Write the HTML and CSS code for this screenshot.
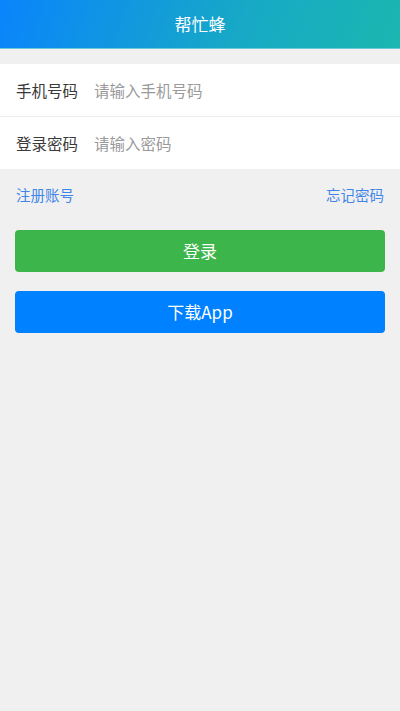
FILE: index.html
```html
<!DOCTYPE html>
<html lang="zh">
<head>
<meta charset="utf-8">
<link rel="stylesheet" href="styles.css">
</head>
<body>
<header class="header">帮忙蜂</header>
<section class="form">
  <div class="row">
    <span class="label">手机号码</span>
    <span class="placeholder">请输入手机号码</span>
  </div>
  <div class="row">
    <span class="label">登录密码</span>
    <span class="placeholder">请输入密码</span>
  </div>
</section>
<div class="links">
  <a class="link">注册账号</a>
  <a class="link">忘记密码</a>
</div>
<div class="buttons">
  <div class="btn btn-login">登录</div>
  <div class="btn btn-app">下载App</div>
</div>
</body>
</html>
```

FILE: styles.css
```css
html, body {
  margin: 0;
  padding: 0;
}
body {
  background: #f0f0f0;
  font-family: "Noto Sans CJK SC", "Liberation Sans", sans-serif;
  min-height: 711px;
}
.header {
  height: 48px;
  line-height: 48px;
  text-align: center;
  color: #fff;
  font-size: 17px;
  background: linear-gradient(110deg, #0a84fc 0%, #17a9c6 60%, #1bb7b0 100%);
  box-shadow: 0 1px 0 #6cc8d8;
}
.form {
  margin-top: 16px;
  background: #fff;
}
.row {
  height: 52px;
  display: flex;
  align-items: center;
  padding-left: 16px;
  font-size: 15.5px;
}
.row + .row {
  border-top: 1px solid #ececec;
}
.label {
  color: #3a3a3a;
  width: 78px;
}
.placeholder {
  color: #9a9a9a;
}
.links {
  display: flex;
  justify-content: space-between;
  padding: 14px 16px 0;
  font-size: 14.5px;
  line-height: 24px;
}
.link {
  color: #3f86e8;
}
.buttons {
  padding: 23px 15px 0;
  display: flex;
  flex-direction: column;
  gap: 19px;
}
.btn {
  height: 42px;
  line-height: 42px;
  border-radius: 4px;
  text-align: center;
  color: #fff;
  font-size: 17px;
}
.btn-login {
  background: #3cb64b;
}
.btn-app {
  background: #0081ff;
}
```
